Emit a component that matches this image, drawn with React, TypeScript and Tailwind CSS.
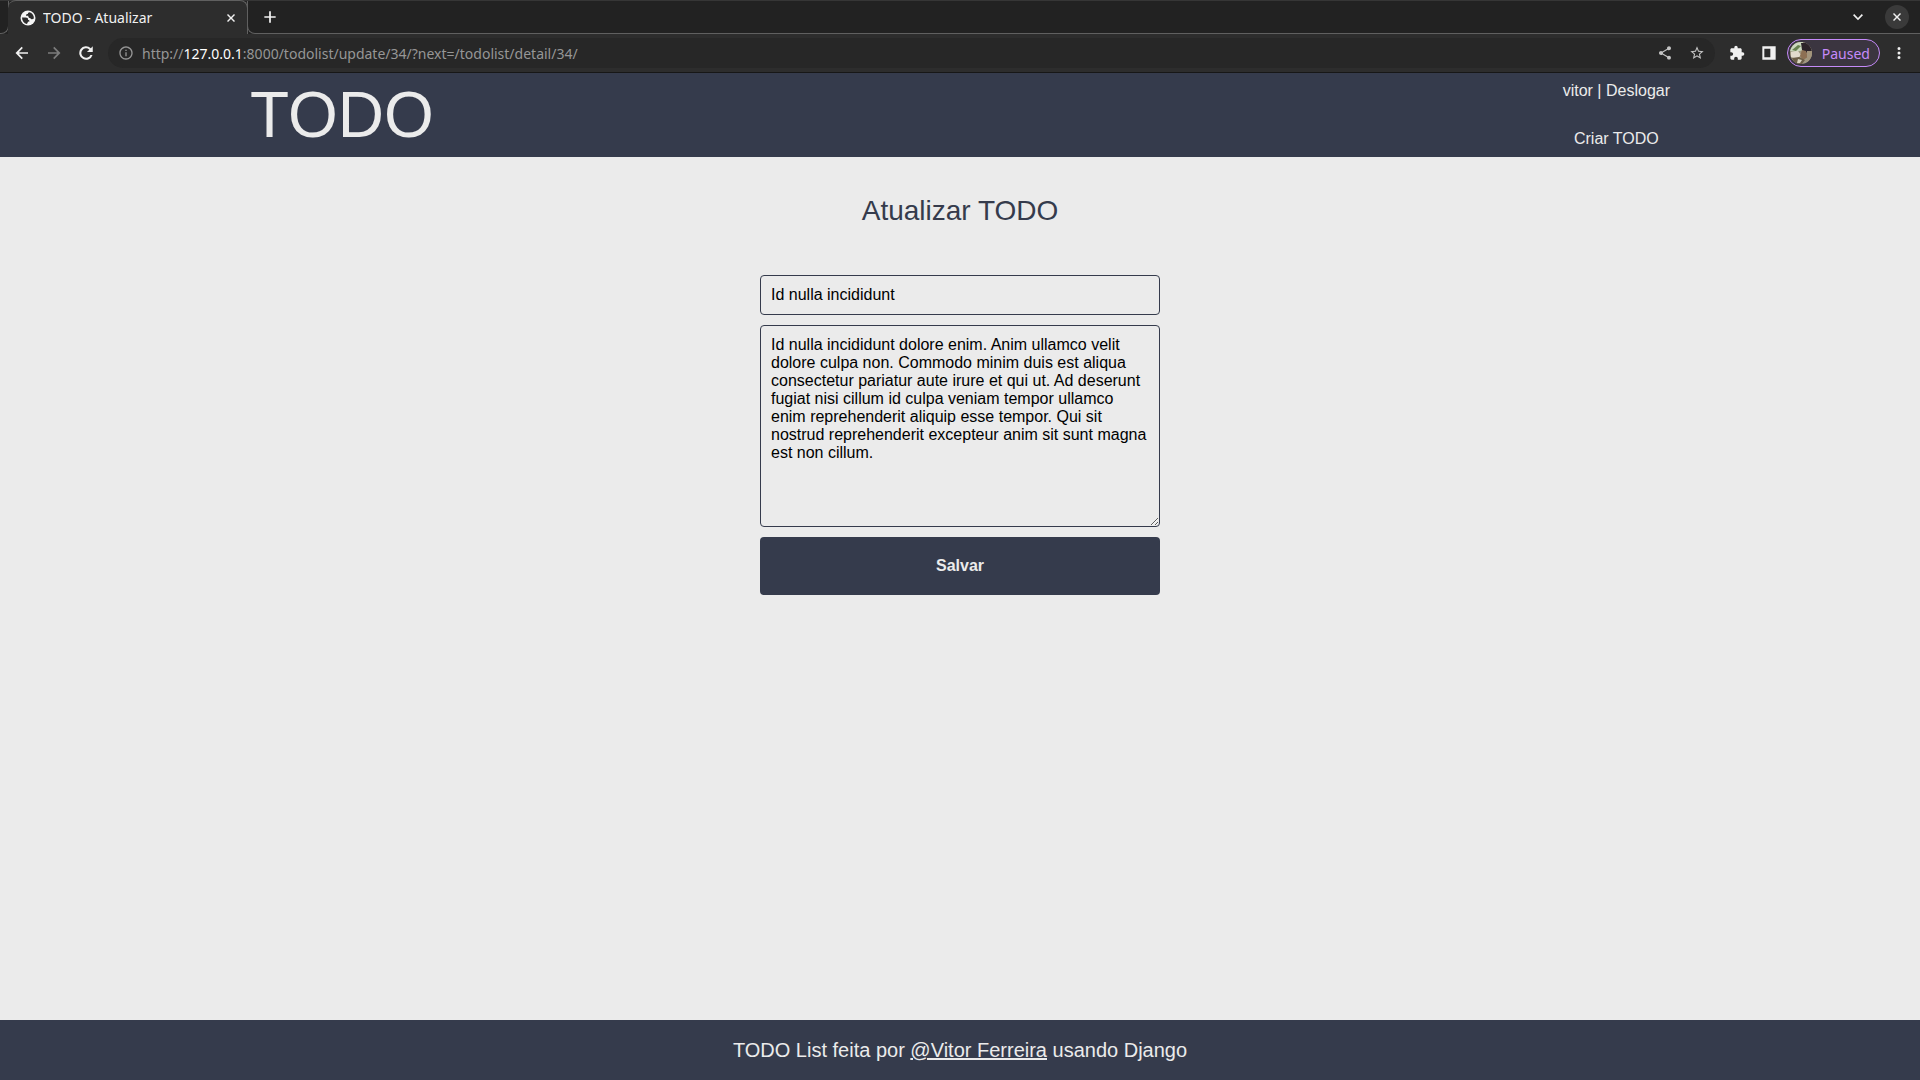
import { type ReactNode } from "react";

const DESCRIPTION =
  "Id nulla incididunt dolore enim. Anim ullamco velit dolore culpa non. Commodo minim duis est aliqua consectetur pariatur aute irure et qui ut. Ad deserunt fugiat nisi cillum id culpa veniam tempor ullamco enim reprehenderit aliquip esse tempor. Qui sit nostrud reprehenderit excepteur anim sit sunt magna est non cillum.";

function Icon({ path, className }: { path: string; className: string }) {
  return (
    <svg viewBox="0 0 24 24" fill="currentColor" aria-hidden="true" className={className}>
      <path d={path} />
    </svg>
  );
}

const ICONS = {
  close:
    "M20 6 18 4 12 10 6 4 4 6 10 12 4 18 6 20 12 14 18 20 20 18 14 12z",
  plus: "M20.500 13.300h-7.200v7.200h-2.600v-7.200H3.500v-2.600h7.200V3.500h2.600v7.200h7.200z",
  back: "M21 10.700H7.200l6.100-6.100L11.500 2.800 2.300 12l9.200 9.200 1.800-1.800-6.100-6.100H21z",
  forward: "M3 10.700h13.800l-6.100-6.100 1.800-1.800 9.200 9.200-9.200 9.200-1.800-1.800 6.100-6.100H3z",
  reload:
    "M18.400 5.600A9 9 0 1 0 20.700 14.500h-2.800A6.300 6.300 0 1 1 16.500 7.500L13.200 10.800H21V3z",
  info: "M11 17h2v-6h-2v6zm1-15C6.480 2 2 6.480 2 12s4.480 10 10 10 10-4.480 10-10S17.520 2 12 2zm0 18c-4.410 0-8-3.590-8-8s3.590-8 8-8 8 3.590 8 8-3.590 8-8 8zM11 9h2V7h-2v2z",
  share:
    "M18 16.080c-.76 0-1.440.3-1.960.77L8.910 12.700c.05-.23.09-.46.09-.7s-.04-.47-.09-.7l7.050-4.110c.54.5 1.250.81 2.040.81 1.660 0 3-1.340 3-3s-1.340-3-3-3-3 1.340-3 3c0 .24.04.47.09.7L8.040 9.810C7.500 9.310 6.790 9 6 9c-1.660 0-3 1.340-3 3s1.340 3 3 3c.79 0 1.500-.31 2.040-.81l7.120 4.160c-.05.21-.08.43-.08.65 0 1.610 1.310 2.920 2.920 2.920s2.920-1.310 2.920-2.920-1.310-2.920-2.920-2.920z",
  star: "m22 9.240-7.190-.62L12 2 9.190 8.630 2 9.240l5.460 4.730L5.820 21 12 17.270 18.180 21l-1.630-7.030L22 9.240zM12 15.400l-3.760 2.270 1-4.280-3.320-2.880 4.380-.38L12 6.100l1.710 4.040 4.380.38-3.320 2.880 1 4.280L12 15.400z",
  puzzle:
    "M20.500 11H19V7c0-1.100-.9-2-2-2h-4V3.500a2.500 2.500 0 0 0-5 0V5H4c-1.100 0-1.990.9-1.990 2v3.800H3.500c1.490 0 2.700 1.210 2.700 2.700s-1.210 2.700-2.700 2.700H2V20c0 1.100.9 2 2 2h3.800v-1.500c0-1.490 1.210-2.700 2.700-2.700s2.700 1.210 2.700 2.700V22H17c1.100 0 2-.9 2-2v-4h1.500a2.500 2.500 0 0 0 0-5z",
  panel: "M2 2h20v20H2V2zm3 3.500v13h9v-13H5z",
  chevron: "M12 17.500 3.500 9l2-2 6.500 6.500L18.500 7l2 2z",
  more: "M12 8a2 2 0 1 0 0-4 2 2 0 0 0 0 4zm0 2a2 2 0 1 0 0 4 2 2 0 0 0 0-4zm0 6a2 2 0 1 0 0 4 2 2 0 0 0 0-4z",
};

function IconButton({
  label,
  className = "",
  children,
}: {
  label: string;
  className?: string;
  children: ReactNode;
}) {
  return (
    <button type="button" aria-label={label} className={`flex shrink-0 items-center justify-center ${className}`}>
      {children}
    </button>
  );
}

function Globe() {
  return (
    <svg viewBox="0 0 16 16" aria-hidden="true" className="mr-[7px] size-4 shrink-0">
      <circle cx="8" cy="8" r="7.500" fill="#f5f5f5" />
      <path
        d="M9.500 2.200C8.600 2.200 7.800 3 7.900 4c-1.500 0-2 .6-1.900 1.700h2.200c.2 1.500.8 2.300 2 2.300.4.900 1 1.300 2 1.200l1.700-.8C14 5.400 12.200 2.900 9.500 2.200z"
        fill="#2d2d2d"
      />
      <path
        d="M2 7.600h3.600c1.800 0 2.600.8 2.500 2.300 1.200 0 1.500.5 1.300 1.600-.9 0-1.600.3-1.700 1-.1.600-.4 1.200-.9 1.500C4 13.400 2 11 2 7.600z"
        fill="#2d2d2d"
      />
    </svg>
  );
}

function Avatar() {
  return (
    <svg viewBox="0 0 22 22" aria-hidden="true" className="size-[22px] rounded-full">
      <rect width="22" height="22" fill="#a09880" />
      <path d="M0 0h13v8L6 10 0 9z" fill="#cbd8be" />
      <path d="M2 8l6-5 3 1-5 5z" fill="#66804f" />
      <path d="M1 10l7-1 3 4-4 4-6-2z" fill="#e2dacd" />
      <path d="M11 1h8l3 8-5 2-5-3z" fill="#2c2329" />
      <path d="M12 8l4 1 2 6-5 3-3-4z" fill="#8d7053" />
      <path d="M17 9h5v10l-5 1z" fill="#a3957c" />
      <path d="M2 16l7-1 6 3-3 4H5z" fill="#6b5d46" />
      <path d="M8 17l4 1-2 3H7z" fill="#d8d3c2" />
    </svg>
  );
}

function BrowserChrome() {
  return (
    <div className="font-['Noto_Sans',sans-serif] text-[14px] text-[#f1f1f1]">
      <div className="flex h-[34px] border-t border-[#363636] bg-[#222222]">
        <div className="w-[9px] shrink-0 rounded-br-lg border-r border-b border-[#606060]" />
        <div className="-mt-px -ml-px flex w-[240px] items-center rounded-t-lg border-t border-r border-[#606060] bg-[#2d2d2d] pr-2 pl-3">
          <Globe />
          <span className="flex-1 truncate">TODO - Atualizar</span>
          <IconButton label="Fechar aba" className="size-4">
            <Icon path={ICONS.close} className="size-3" />
          </IconButton>
        </div>
        <div className="-ml-px flex flex-1 items-center justify-between rounded-bl-lg border-b border-l border-[#606060] pr-[11px] pl-3">
          <IconButton label="Nova aba" className="size-5">
            <Icon path={ICONS.plus} className="size-4" />
          </IconButton>
          <div className="flex items-center gap-[17px]">
            <IconButton label="Pesquisar abas" className="size-5">
              <Icon path={ICONS.chevron} className="size-[14px]" />
            </IconButton>
            <IconButton label="Fechar janela" className="size-6 rounded-full bg-[#3a3a3a]">
              <Icon path={ICONS.close} className="size-3" />
            </IconButton>
          </div>
        </div>
      </div>

      <div className="flex h-[39px] items-center border-b border-[#171717] bg-[#2d2d2d] pr-3 pl-3">
        <div className="flex gap-3">
          <IconButton label="Voltar" className="size-5">
            <Icon path={ICONS.back} className="size-4" />
          </IconButton>
          <IconButton label="Avançar" className="size-5 text-[#7c7c7c]">
            <Icon path={ICONS.forward} className="size-4" />
          </IconButton>
          <IconButton label="Recarregar" className="size-5">
            <Icon path={ICONS.reload} className="size-[18px]" />
          </IconButton>
        </div>
        <div className="ml-3 flex h-[30px] flex-1 items-center rounded-full bg-[#272727] pr-[10px] pl-[10px] text-[#969696]">
          <Icon path={ICONS.info} className="mr-2 size-4 shrink-0" />
          <p className="flex-1">
            http://<span className="text-white">127.0.0.1</span>:8000/todolist/update/34/?next=/todolist/detail/34/
          </p>
          <div className="flex gap-4 text-[#c4c4c4]">
            <IconButton label="Compartilhar" className="size-4">
              <Icon path={ICONS.share} className="size-4" />
            </IconButton>
            <IconButton label="Favoritar" className="size-4">
              <Icon path={ICONS.star} className="size-4" />
            </IconButton>
          </div>
        </div>
        <div className="ml-[14px] flex items-center">
          <IconButton label="Extensões" className="mr-4 size-4">
            <Icon path={ICONS.puzzle} className="size-4" />
          </IconButton>
          <IconButton label="Painel lateral" className="mr-[10px] size-4">
            <Icon path={ICONS.panel} className="size-4" />
          </IconButton>
          <button
            type="button"
            className="mr-[10px] flex h-7 w-[93px] items-center justify-between rounded-full border border-[#c58af9] bg-[#3b3540] pr-[9px] pl-[2px] text-[#c58af9]"
          >
            <Avatar />
            Paused
          </button>
          <IconButton label="Menu" className="size-[18px]">
            <Icon path={ICONS.more} className="size-[18px]" />
          </IconButton>
        </div>
      </div>
    </div>
  );
}

export default function App() {
  return (
    <div className="flex min-h-screen flex-col bg-[#ebebeb] font-['Liberation_Sans',Arial,sans-serif] text-base">
      <BrowserChrome />

      <header className="bg-[#353b4c] py-[5px] text-[#ebebeb]">
        <div className="mx-auto flex max-w-[1420px] items-center justify-between">
          <a href="#inicio" className="text-[64px] leading-[74px]">
            TODO
          </a>
          <nav className="flex flex-col items-center gap-[30px] leading-[18px]">
            <p>
              <a href="#perfil">vitor</a> | <a href="#sair">Deslogar</a>
            </p>
            <a href="#criar">Criar TODO</a>
          </nav>
        </div>
      </header>

      <main className="flex flex-1 flex-col items-center pt-[38px]">
        <h1 className="mb-12 text-[28px] leading-8 text-[#353b4c]">Atualizar TODO</h1>
        <form className="flex w-full max-w-[400px] flex-col gap-[10px]" onSubmit={(event) => event.preventDefault()}>
          <input
            type="text"
            aria-label="Título"
            defaultValue="Id nulla incididunt"
            className="h-10 rounded border border-[#353b4c] bg-transparent p-[10px] text-black"
          />
          <textarea
            aria-label="Descrição"
            rows={10}
            spellCheck={false}
            defaultValue={DESCRIPTION}
            className="rounded border border-[#353b4c] bg-transparent p-[10px] leading-[18px] text-black"
          />
          <button type="submit" className="rounded bg-[#353b4c] p-5 leading-[18px] font-bold text-[#ebebeb]">
            Salvar
          </button>
        </form>
      </main>

      <footer className="flex h-[60px] items-center justify-center bg-[#353b4c] text-[20px] text-[#ebebeb]">
        <p>
          TODO List feita por{" "}
          <a href="#autor" className="underline">
            @Vitor Ferreira
          </a>{" "}
          usando Django
        </p>
      </footer>
    </div>
  );
}
